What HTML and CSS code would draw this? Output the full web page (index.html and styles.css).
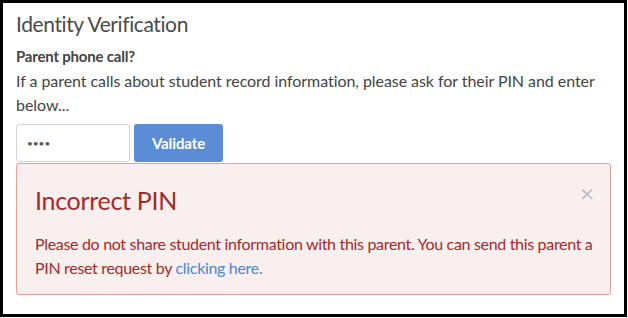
FILE: index.html
```html
<!DOCTYPE html>
<html lang="en">
<head>
<meta charset="utf-8">
<title>Identity Verification</title>
<link rel="stylesheet" href="styles.css">
</head>
<body>
<div class="frame">
  <h2 class="title">Identity Verification</h2>
  <p class="label">Parent phone call?</p>
  <p class="desc">If a parent calls about student record information, please ask for their PIN and enter below...</p>
  <div class="form-row">
    <input class="pin" type="password" value="1234">
    <button class="btn" type="button">Validate</button>
  </div>
  <div class="alert">
    <span class="close">&times;</span>
    <h3 class="alert-title">Incorrect PIN</h3>
    <p class="alert-text">Please do not share student information with this parent. You can send this parent a PIN reset request by <a class="link" href="#">clicking here.</a></p>
  </div>
</div>
</body>
</html>
```

FILE: styles.css
```css
* { box-sizing: border-box; }
html, body { margin: 0; padding: 0; background: #fff; }
body { font-family: Lato, "Noto Sans", sans-serif; color: #444; }
.frame {
  width: 627px;
  height: 317px;
  border: 3px solid #000;
  padding: 8px 13px 0 13px;
  display: flex;
  flex-direction: column;
}
.title {
  margin: 0;
  font-size: 21px;
  font-weight: 400;
  line-height: 26px;
  letter-spacing: -0.4px;
  color: #4a4a4a;
}
.label {
  margin: 7px 0 0 0;
  font-size: 15px;
  font-weight: 700;
  line-height: 24px;
  letter-spacing: -0.2px;
}
.desc {
  margin: 1px 0 0 0;
  font-size: 16px;
  line-height: 24px;
  letter-spacing: -0.06px;
}
.form-row {
  margin-top: 7px;
  display: flex;
  gap: 4px;
}
.pin {
  width: 114px;
  height: 38px;
  border: 1px solid #d4d4d4;
  border-radius: 3px;
  padding: 0 10px;
  font-size: 10px;
  letter-spacing: 0;
  color: #555;
  font-family: inherit;
}
.btn {
  width: 89px;
  height: 38px;
  border: none;
  border-radius: 3px;
  background: #5b8dd6;
  color: #fff;
  font-family: inherit;
  font-weight: 700;
  font-size: 15px;
  letter-spacing: -0.1px;
}
.alert {
  position: relative;
  margin-top: 1px;
  width: 595px;
  height: 132px;
  background: #f9efef;
  border: 1px solid #eb9d9d;
  border-radius: 3px;
  padding: 20px 8px 0 18px;
  color: #a32a2a;
}
.close {
  position: absolute;
  right: 16px;
  top: 18px;
  font-size: 24px;
  line-height: 22px;
  color: #bbb;
}
.alert-title {
  margin: 0;
  font-size: 25px;
  font-weight: 400;
  line-height: 32px;
  letter-spacing: -0.3px;
}
.alert-text {
  margin: 16px 0 0 0;
  font-size: 16px;
  line-height: 24px;
  letter-spacing: -0.32px;
}
.link { color: #4a86d4; text-decoration: none; }
```
